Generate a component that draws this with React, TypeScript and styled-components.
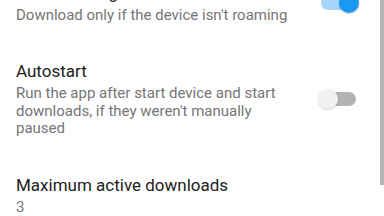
import React from 'react';
import styled, { createGlobalStyle } from 'styled-components';

const GlobalStyle = createGlobalStyle`
  html, body {
    margin: 0;
    padding: 0;
    background: #ffffff;
    overflow: hidden;
  }
  body {
    font-family: Roboto, 'Noto Sans', sans-serif;
  }
`;

const Screen = styled.div`
  position: relative;
  width: 384px;
  height: 216px;
  overflow: hidden;
  background: #ffffff;
`;

const List = styled.div`
  display: flex;
  flex-direction: column;
  margin-top: -36px;
`;

const Item = styled.div`
  display: flex;
  align-items: center;
  gap: 28px;
  padding: 18.5px 25px 18.5px 16px;
`;

const Texts = styled.div`
  flex: 1;
  min-width: 0;
  display: flex;
  flex-direction: column;
`;

const Title = styled.div`
  font-size: 17px;
  line-height: 21px;
  color: #212121;
`;

const Summary = styled.div`
  margin-top: 3px;
  font-size: 15px;
  line-height: 17.5px;
  color: #757575;
`;

const SwitchBox = styled.div`
  position: relative;
  flex: none;
  width: 41px;
  height: 20px;
`;

const Track = styled.div<{ $on: boolean }>`
  position: absolute;
  left: 3px;
  right: 3px;
  top: 3px;
  height: 14px;
  border-radius: 7px;
  background: ${p => (p.$on ? '#a6d6fa' : '#b3b3b3')};
`;

const Thumb = styled.div<{ $on: boolean }>`
  position: absolute;
  top: 0;
  left: ${p => (p.$on ? '21px' : '0')};
  width: 20px;
  height: 20px;
  border-radius: 50%;
  background: ${p => (p.$on ? '#1b98f1' : '#f1f1f1')};
  box-shadow: 0 1px 2px rgba(0, 0, 0, 0.18);
`;

const Scrollbar = styled.div`
  position: absolute;
  top: 0;
  right: 0;
  width: 4px;
  height: 185px;
  background: #b4b4b4;
`;

interface Pref {
  title: string;
  summary: string;
  toggle?: boolean;
}

const prefs: Pref[] = [
  { title: 'Data roaming', summary: "Download only if the device isn't roaming", toggle: true },
  {
    title: 'Autostart',
    summary: "Run the app after start device and start downloads, if they weren't manually paused",
    toggle: false,
  },
  { title: 'Maximum active downloads', summary: '3' },
];

const Switch: React.FC<{ on: boolean }> = ({ on }) => (
  <SwitchBox>
    <Track $on={on} />
    <Thumb $on={on} />
  </SwitchBox>
);

export default function App() {
  return (
    <Screen>
      <GlobalStyle />
      <List>
        {prefs.map(p => (
          <Item key={p.title}>
            <Texts>
              <Title>{p.title}</Title>
              <Summary>{p.summary}</Summary>
            </Texts>
            {p.toggle !== undefined && <Switch on={p.toggle} />}
          </Item>
        ))}
      </List>
      <Scrollbar />
    </Screen>
  );
}
